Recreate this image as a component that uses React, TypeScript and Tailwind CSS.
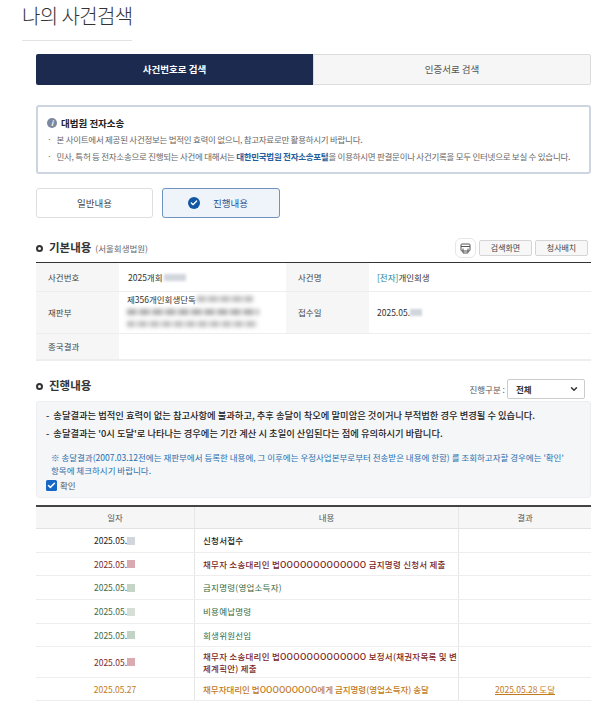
import { ChevronDown, Check } from 'lucide-react'

const rows = [
  { day: 'bg-gray-300', date: 'text-[#222]', text: '신청서접수', bold: true, color: 'text-[#222]', h: 'h-[24px]' },
  { day: 'bg-[#d9aab0]', date: 'text-[#7a2a30]', text: '채무자 소송대리인 법OOOOOOOOOOOOO 금지명령 신청서 제출', bold: true, color: 'text-[#7a1f24]', h: 'h-[23px]' },
  { day: 'bg-[#c6d4c6]', date: 'text-[#3f6b4a]', text: '금지명령(영업소득자)', bold: false, color: 'text-[#2f6b42]', h: 'h-[24px]' },
  { day: 'bg-[#d5dfd5]', date: 'text-[#3f6b4a]', text: '비용예납명령', bold: false, color: 'text-[#2f6b42]', h: 'h-[24px]' },
  { day: 'bg-[#c2d2c4]', date: 'text-[#3f6b4a]', text: '회생위원선임', bold: false, color: 'text-[#2f6b42]', h: 'h-[23px]' },
  { day: 'bg-[#d9aab0]', date: 'text-[#7a2a30]', text: '채무자 소송대리인 법OOOOOOOOOOOOO 보정서(채권자목록 및 변\n제계획안) 제출', bold: true, color: 'text-[#7a1f24]', h: 'h-[31px]' },
]

function SectionDot() {
  return <span className="h-[7px] w-[7px] rounded-full border-2 border-[#333]" />
}

export default function App() {
  return (
    <div className="h-[704px] w-[600px] overflow-hidden bg-white font-['Noto_Sans_CJK_KR',sans-serif] text-[9px] text-[#444]">
      <div className="ml-[22px] h-[41px] w-[110px] border-b border-[#e3e3e3] pt-[2px]">
        <h1 className="whitespace-nowrap text-[20px] leading-[28px] font-light tracking-[-0.6px] text-[#333]">나의 사건검색</h1>
      </div>

      <div className="ml-[36px] w-[555px]">
        <div className="mt-[13px] flex h-[31px] text-[9.5px]">
          <div className="flex w-[277px] items-center justify-center rounded-l-[2px] bg-[#1b2a4e] font-bold text-white">사건번호로 검색</div>
          <div className="flex flex-1 items-center justify-center rounded-r-[2px] border border-[#dcdcdc] bg-[#f6f6f6] text-[#555]">인증서로 검색</div>
        </div>

        <div className="mt-[20px] h-[69px] rounded-[3px] border-2 border-[#cdd5e0] px-[9px] pt-[8px]">
          <div className="flex items-center gap-[4px] text-[9.5px] leading-[16px] font-bold text-[#222]">
            <span className="flex h-[10px] w-[10px] items-center justify-center rounded-full bg-[#7d88a0] text-[7px] leading-none text-white italic">i</span>
            대법원 전자소송
          </div>
          <p className="whitespace-nowrap text-[8.5px] leading-[16px] tracking-[-0.27px] text-[#666]">
            <span className="mr-[5px]">·</span>본 사이트에서 제공된 사건정보는 법적인 효력이 없으니, 참고자료로만 활용하시기 바랍니다.
          </p>
          <p className="mt-[1px] whitespace-nowrap text-[8.5px] leading-[16px] tracking-[-0.27px] text-[#666]">
            <span className="mr-[5px]">·</span>민사, 특허 등 전자소송으로 진행되는 사건에 대해서는 <span className="font-bold text-[#1f5f9e]">대한민국법원 전자소송포털</span>을 이용하시면 판결문이나 사건기록을 모두 인터넷으로 보실 수 있습니다.
          </p>
        </div>

        <div className="mt-[14px] flex h-[30px] gap-[9px] text-[9.5px]">
          <div className="flex w-[117px] items-center justify-center rounded-[3px] border border-[#dedede] text-[#444]">일반내용</div>
          <div className="flex w-[118px] items-center justify-center gap-[13px] rounded-[3px] border border-[#6f92be] bg-[#eff4fa] pr-[6px] text-[#1f4f8f]">
            <span className="flex h-[12px] w-[12px] items-center justify-center rounded-full bg-[#1257a5]">
              <Check className="h-[8px] w-[8px] text-white" strokeWidth={4} />
            </span>
            진행내용
          </div>
        </div>

        <div className="mt-[19px] flex h-[22px] items-center">
          <SectionDot />
          <h2 className="ml-[6px] text-[11.5px] font-bold text-[#333]">기본내용</h2>
          <span className="ml-[4px] text-[8.5px] text-[#666]">(서울회생법원)</span>
          <div className="ml-auto mr-[3px] flex items-center gap-[3px]">
            <span className="flex h-[20px] w-[21px] items-center justify-center rounded-[6px] border border-[#e6e6e6]">
              <svg width="11" height="11" viewBox="0 0 11 11" fill="none" stroke="#555" strokeWidth="1">
                <rect x="1" y="1" width="9" height="7" rx="1" />
                <path d="M1 3.5h9M3 5.5v4.5h5V5.5" />
              </svg>
            </span>
            <span className="flex h-[16px] w-[53px] items-center justify-center rounded-[2px] border border-[#d5d5d5] bg-[#f7f7f7] text-[8px] text-[#444]">검색화면</span>
            <span className="flex h-[16px] w-[53px] items-center justify-center rounded-[2px] border border-[#d5d5d5] bg-[#f7f7f7] text-[8px] text-[#444]">청사배치</span>
          </div>
        </div>

        <div className="mt-[3px] grid grid-cols-[83px_167px_83px_222px] grid-rows-[29px_42px_27px] border-t border-t-[#333] text-[8.5px]">
          <div className="flex items-center border-b border-[#eee] bg-[#f6f6f6] pl-[12px]">사건번호</div>
          <div className="flex items-center border-b border-[#eee] pl-[9px] text-[#333]">
            2025개회<span className="ml-[1px] h-[7px] w-[22px] bg-gray-300 blur-[1.5px]" />
          </div>
          <div className="flex items-center border-b border-[#eee] bg-[#f6f6f6] pl-[12px]">사건명</div>
          <div className="flex items-center border-b border-[#eee] pl-[8px] text-[#333]"><span className="text-[#1f7f8f]">[전자]</span>개인회생</div>

          <div className="flex items-center border-b border-[#eee] bg-[#f6f6f6] pl-[12px]">재판부</div>
          <div className="flex flex-col justify-center gap-[6px] border-b border-[#eee] pb-[3px] pl-[8px] text-[#333]">
            <div className="flex h-[8px] items-center leading-none whitespace-nowrap">
              제356개인회생단독<span className="ml-[1px] h-[6px] w-[56px] bg-[repeating-linear-gradient(90deg,#bbb_0_8px,#ddd_8px_12px)] blur-[2px]" />
            </div>
            <div className="h-[6px] w-[132px] bg-[repeating-linear-gradient(90deg,#aaa_0_9px,#ddd_9px_13px)] blur-[2px]" />
            <div className="h-[6px] w-[130px] bg-[repeating-linear-gradient(90deg,#bbb_0_7px,#ddd_7px_12px)] blur-[2px]" />
          </div>
          <div className="flex items-center border-b border-[#eee] bg-[#f6f6f6] pl-[12px]">접수일</div>
          <div className="flex items-center border-b border-[#eee] pl-[8px] text-[#333]">
            2025.05.<span className="h-[7px] w-[12px] bg-gray-300 blur-[1px]" />
          </div>

          <div className="flex items-center border-b-2 border-[#eee] bg-[#f6f6f6] pl-[12px]">종국결과</div>
          <div className="col-span-3 border-b-2 border-[#eee]" />
        </div>

        <div className="mt-[18px] flex h-[20px] items-center">
          <span className="mb-[6px] flex items-center">
            <SectionDot />
            <h2 className="ml-[6px] text-[11.5px] font-bold text-[#333]">진행내용</h2>
          </span>
          <span className="ml-auto mr-[2px] text-[8.5px] text-[#555]">진행구분 :</span>
          <div className="mr-[6px] flex h-[20px] w-[78px] items-center justify-between rounded-[2px] border border-[#ccc] pl-[8px] pr-[5px] text-[8.5px] font-bold text-[#333]">
            전체
            <ChevronDown className="h-[10px] w-[10px]" strokeWidth={3.5} />
          </div>
        </div>

        <div className="mt-[2px] h-[97px] rounded-[3px] border border-[#eceef1] bg-[#f5f6f8] pl-[9px] pt-[5px]">
          <p className="whitespace-nowrap text-[9.3px] leading-[17.5px] font-medium text-[#222]"><span className="mr-[4px]">-</span>송달결과는 법적인 효력이 없는 참고사항에 불과하고, 추후 송달이 착오에 말미암은 것이거나 부적법한 경우 변경될 수 있습니다.</p>
          <p className="whitespace-nowrap text-[9.3px] leading-[17.5px] font-medium text-[#222]"><span className="mr-[4px]">-</span>송달결과는 '0시 도달'로 나타나는 경우에는 기간 계산 시 초일이 산입된다는 점에 유의하시기 바랍니다.</p>
          <p className="mt-[9px] ml-[5px] whitespace-nowrap text-[8.5px] leading-[12.5px] text-[#1f6fae]">※ 송달결과(2007.03.12전에는 재판부에서 등록한 내용에, 그 이후에는 우정사업본부로부터 전송받은 내용에 한함) 를 조회하고자할 경우에는 '확인'<br />항목에 체크하시기 바랍니다.</p>
          <label className="mt-[3px] flex items-center gap-[3px] text-[8.5px] text-[#555]">
            <span className="flex h-[11px] w-[11px] items-center justify-center rounded-[1.5px] bg-[#1668c7]">
              <Check className="h-[9px] w-[9px] text-white" strokeWidth={4} />
            </span>
            확인
          </label>
        </div>

        <div className="mt-[7px] border-t-2 border-[#444] text-[8.5px]">
          <div className="grid h-[22px] grid-cols-[158px_265px_132px] border-b border-[#e3e3e3] bg-[#f6f6f6] text-center text-[#555]">
            <div className="flex items-center justify-center">일자</div>
            <div className="flex items-center justify-center border-x border-[#e6e6e6]">내용</div>
            <div className="flex items-center justify-center">결과</div>
          </div>
          {rows.map((r, i) => (
            <div key={i} className={`grid grid-cols-[158px_265px_132px] border-b border-[#eee] ${r.h}`}>
              <div className={`flex items-center justify-center pr-[1px] ${r.date}`}>
                2025.05.<span className={`h-[8px] w-[8px] blur-[0.5px] ${r.day}`} />
              </div>
              <div className={`flex items-center whitespace-pre-line border-x border-[#e6e6e6] pl-[8px] text-[8.5px] leading-[12.5px] tracking-[0.25px] ${r.color} ${r.bold ? 'font-medium' : ''}`}>{r.text}</div>
              <div />
            </div>
          ))}
          <div className="grid h-[23px] grid-cols-[158px_265px_132px] border-b border-[#eee] text-[#c27a1e]">
            <div className="flex items-center justify-center">2025.05.27</div>
            <div className="flex items-center border-x border-[#e6e6e6] pl-[8px] font-medium">채무자대리인 법OOOOOOOOO에게 금지명령(영업소득자) 송달</div>
            <div className="flex items-center justify-center underline">2025.05.28 도달</div>
          </div>
        </div>
      </div>
    </div>
  )
}
